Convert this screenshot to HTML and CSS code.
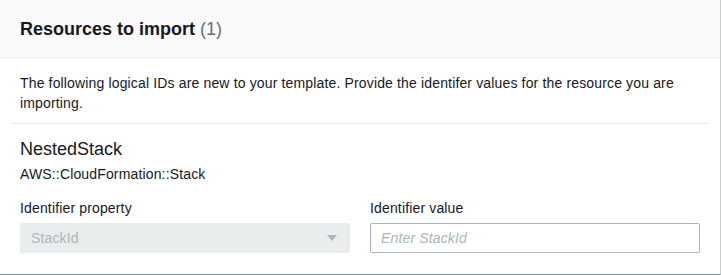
FILE: index.html
```html
<!DOCTYPE html>
<html lang="en">
<head>
    <meta charset="UTF-8">
    <title>Resources to import</title>
    <link rel="stylesheet" href="styles.css">
</head>
<body>
    <div class="panel">
        <div class="panel-header">
            <h2>Resources to import <span class="count">(1)</span></h2>
        </div>
        <div class="panel-body">
            <p class="intro">The following logical IDs are new to your template. Provide the identifer values for the resource you are importing.</p>

            <div class="resource">
                <div class="resource-name">NestedStack</div>
                <div class="resource-type">AWS::CloudFormation::Stack</div>

                <div class="fields">
                    <div class="field">
                        <label>Identifier property</label>
                        <div class="select disabled">
                            <span>StackId</span>
                            <span class="caret"></span>
                        </div>
                    </div>
                    <div class="field">
                        <label for="value">Identifier value</label>
                        <input type="text" id="value" placeholder="Enter StackId">
                    </div>
                </div>
            </div>
        </div>
    </div>
</body>
</html>
```

FILE: styles.css
```css
* {
    margin: 0;
    padding: 0;
    box-sizing: border-box;
}

body {
    font-family: 'Liberation Sans', Arial, sans-serif;
    font-size: 14px;
    line-height: 20px;
    letter-spacing: 0.15px;
    color: #16191f;
    background: white;
}

.panel {
    width: 721px;
    height: 275px;
    border-right: 1px solid #c6cdcd;
    border-bottom: 1px solid #879596;
    background: white;
}

.panel-header {
    height: 58px;
    background: #fafafa;
    border-bottom: 1px solid #eaeded;
    padding: 17px 20px 0;
}

.panel-header h2 {
    font-size: 18px;
    line-height: 24px;
    font-weight: 700;
    letter-spacing: 0;
}

.count {
    font-weight: 400;
    color: #687078;
}

.panel-body {
    padding: 15px 10px 0;
}

.intro {
    padding: 0 10px 10px;
    border-bottom: 1px solid #eaeded;
}

.resource {
    padding: 12px 10px 0;
}

.resource-name {
    font-size: 18px;
    line-height: 26px;
    letter-spacing: 0;
}

.resource-type {
    margin-top: 2px;
    font-size: 14px;
    line-height: 20px;
}

.fields {
    display: grid;
    grid-template-columns: 330px 330px;
    column-gap: 20px;
    margin-top: 14px;
}

.field label {
    display: block;
    margin-bottom: 5px;
}

.select,
.field input {
    height: 30px;
    width: 100%;
    border-radius: 2px;
    font-family: inherit;
    font-size: 14px;
    letter-spacing: 0.15px;
}

.select {
    display: flex;
    align-items: center;
    justify-content: space-between;
    padding: 0 13px 0 11px;
    background: #eaeded;
    color: #aab7b8;
}

.caret {
    width: 0;
    height: 0;
    border-left: 5px solid transparent;
    border-right: 5px solid transparent;
    border-top: 6px solid #aab7b8;
}

.field input {
    border: 1px solid #aab7b8;
    padding: 0 10px;
    color: #16191f;
    outline: none;
}

.field input::placeholder {
    color: #aab7b8;
    font-style: italic;
}
```
